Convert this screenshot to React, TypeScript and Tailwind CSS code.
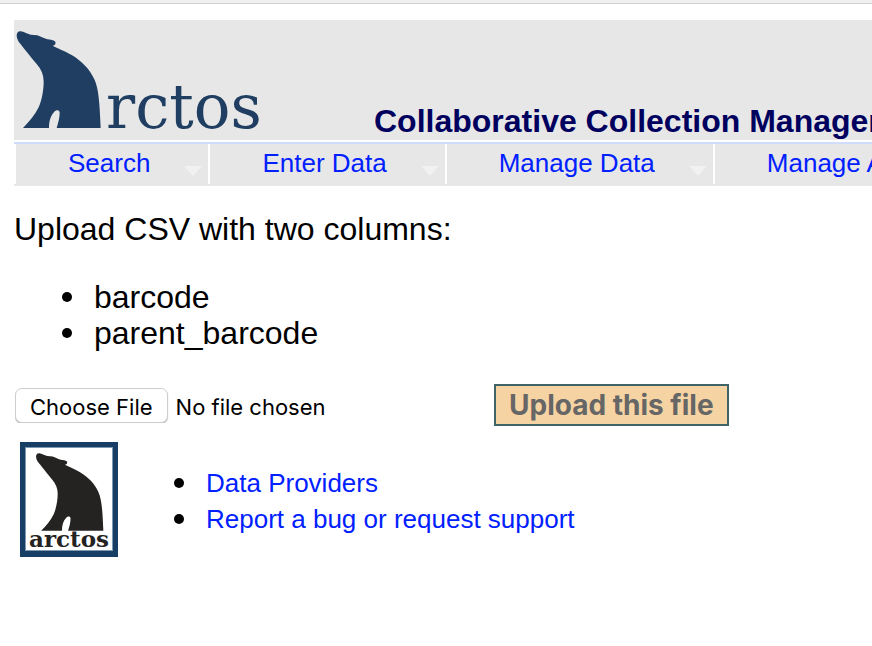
const BEAR =
  "M50 105C51 98 55 93 62 94C72 95 80 101 92 104L112 106C122 109 130 115 142 118C152 120 160 119 166 125C168 131 165 136 158 137C172 145 195 153 215 165C245 183 270 208 283 238C296 265 299 310 302 384L170 384C174 370 180 352 179 336C176 328 168 330 163 335C152 347 147 362 147 384L69 384C88 365 105 345 116 322C126 300 131 270 131 245C131 225 124 208 110 192C90 168 68 140 56 125C52 118 50 112 50 105Z";

const MENU = ["Search", "Enter Data", "Manage Data", "Manage Arctos"];

const BULLET =
  "flex items-center gap-[22px] before:size-2.5 before:shrink-0 before:rounded-full before:bg-black before:content-['']";

function HeaderLogo() {
  return (
    <svg viewBox="14 20 256 120" className="h-[120px] w-64 shrink-0" role="img" aria-label="Arctos">
      <path d={BEAR} transform="scale(0.33333)" fill="#1f3e61" />
      <text x="106" y="128" fill="#1f3e61" fontSize="61" fontFamily="'DejaVu Serif', serif">rctos</text>
    </svg>
  );
}

function FooterLogo() {
  return (
    <svg viewBox="20 442 98 115" className="h-[115px] w-[98px] shrink-0" role="img" aria-label="Arctos">
      <rect x="20" y="442" width="98" height="115" fill="#173f66" />
      <rect x="25.5" y="447.5" width="87" height="103" fill="#fff" stroke="#8199b0" strokeWidth="1" />
      <path d={BEAR} transform="translate(22.7 428.2) scale(0.267)" fill="#242321" />
      <text x="29" y="547" fill="#242321" fontSize="23" fontWeight="bold" fontFamily="'DejaVu Serif', serif">arctos</text>
    </svg>
  );
}

export default function App() {
  return (
    <div className="min-h-screen overflow-x-hidden bg-white font-['Liberation_Sans',Arial,sans-serif] text-black">
      <div className="h-1 border-b border-[#d0d0d0] bg-[#f0f0f0]" />
      <div className="pt-4 pl-3.5">
        <header className="flex items-end overflow-hidden bg-[#e7e7e7]">
          <HeaderLogo />
          <h1 className="ml-[104px] pb-px text-[32px] leading-9 font-bold whitespace-nowrap text-[#00005f]">
            Collaborative Collection Management Solution
          </h1>
        </header>
        <nav className="mt-0.5 overflow-hidden border-t-2 border-[#d0dcfc] bg-[#e7e7e7] pb-0.5">
          <ul className="flex">
            {MENU.map((label) => (
              <li key={label} className="relative shrink-0 border-l-2 border-white">
                <a href="#" className="block h-10 pr-[58px] pl-[52px] text-[26px] leading-[38px] whitespace-nowrap text-[#0020ff]">
                  {label}
                </a>
                <svg viewBox="0 0 18 10" className="pointer-events-none absolute right-1.5 bottom-2 h-2.5 w-[18px]" aria-hidden="true">
                  <path d="M0 0H18L9 10Z" fill="#f1f1f1" />
                </svg>
              </li>
            ))}
          </ul>
        </nav>
        <main className="pt-[25px]">
          <p className="text-[32px] leading-9">Upload CSV with two columns:</p>
          <ul className="mt-8 pl-12 text-[32px] leading-9">
            <li className={BULLET}>barcode</li>
            <li className={BULLET}>parent_barcode</li>
          </ul>
          <form className="mt-[33px] flex items-center" onSubmit={(e) => e.preventDefault()}>
            <input
              type="file"
              aria-label="CSV file"
              className="ml-px w-[479px] font-[Inter,sans-serif] text-[22px] leading-8 file:mr-2 file:h-[35px] file:rounded-[7px] file:border file:border-solid file:border-[#cdcdcd] file:bg-white file:px-3.5 file:pt-0.5 file:shadow-[0_1px_1px_#bbbbbb]"
            />
            <button
              type="submit"
              className="h-[42px] border-2 border-[#3e6467] bg-[#f6d3a2] px-[13px] font-[Inter,sans-serif] text-[28px] leading-9 font-bold whitespace-nowrap text-[#666666]"
            >
              Upload this file
            </button>
          </form>
        </main>
        <footer className="mt-4 flex items-start pl-1.5">
          <FooterLogo />
          <ul className="mt-[23px] ml-14 text-[26px] leading-9">
            <li className={BULLET}>
              <a href="#" className="text-[#0020ff]">Data Providers</a>
            </li>
            <li className={BULLET}>
              <a href="#" className="text-[#0020ff]">Report a bug or request support</a>
            </li>
          </ul>
        </footer>
      </div>
    </div>
  );
}
